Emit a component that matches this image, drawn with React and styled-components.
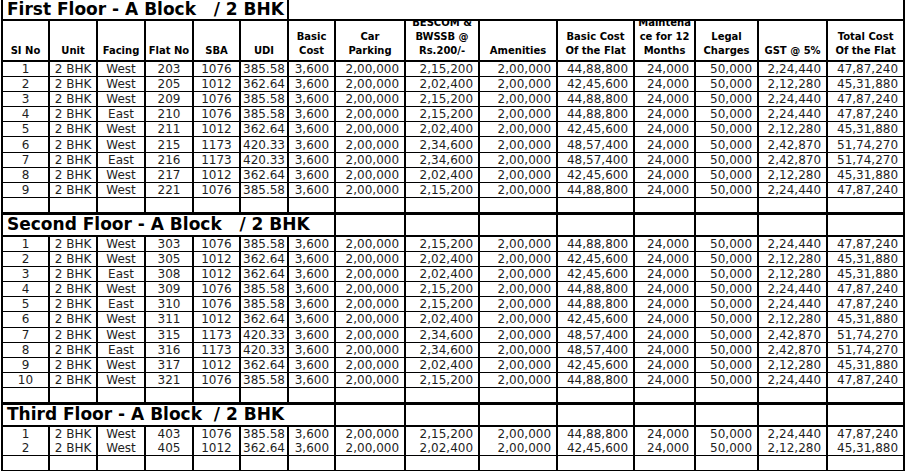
import React from "react";
import styled, { createGlobalStyle } from "styled-components";

const GlobalStyle = createGlobalStyle`
  body {
    margin: 0;
    background: #fff;
  }
`;

const COL_WIDTHS = [47, 48, 48, 48, 47, 48, 47, 70, 74, 78, 77, 61, 63, 69, 77];
const ALIGN = ["center", "center", "center", "center", "center", "center",
  "right", "right", "right", "right", "right", "right", "right", "right", "right"];

const HEADERS = [
  ["SI No"], ["Unit"], ["Facing"], ["Flat No"], ["SBA"], ["UDI"],
  ["Basic", "Cost"], ["Car", "Parking"], ["BESCOM &", "BWSSB @", "Rs.200/-"],
  ["Amenities"], ["Basic Cost", "Of the Flat"], ["Maintena", "ce for 12", "Months"],
  ["Legal", "Charges"], ["GST @ 5%"], ["Total Cost", "Of the Flat"],
];

// flat types: sba, udi, bescom, basic flat cost, gst, total
const TYPES = {
  A: ["1076", "385.58", "2,15,200", "44,88,800", "2,24,440", "47,87,240"],
  B: ["1012", "362.64", "2,02,400", "42,45,600", "2,12,280", "45,31,880"],
  C: ["1173", "420.33", "2,34,600", "48,57,400", "2,42,870", "51,74,270"],
};

const FLOORS = [
  {
    title: "First Floor - A Block   / 2 BHK",
    flats: [
      ["West", "203", "A"], ["West", "205", "B"], ["West", "209", "A"],
      ["East", "210", "A"], ["West", "211", "B"], ["West", "215", "C"],
      ["East", "216", "C"], ["West", "217", "B"], ["West", "221", "A"],
    ],
  },
  {
    title: "Second Floor - A Block   / 2 BHK",
    flats: [
      ["West", "303", "A"], ["West", "305", "B"], ["East", "308", "B"],
      ["West", "309", "A"], ["East", "310", "A"], ["West", "311", "B"],
      ["West", "315", "C"], ["East", "316", "C"], ["West", "317", "B"],
      ["West", "321", "A"],
    ],
  },
  {
    title: "Third Floor - A Block  / 2 BHK",
    flats: [["West", "403", "A"], ["West", "405", "B"]],
    noInnerLines: true,
  },
];

const toRow = (i, [facing, flatNo, type]) => {
  const [sba, udi, bescom, basic, gst, total] = TYPES[type];
  return [String(i + 1), "2 BHK", facing, flatNo, sba, udi, "3,600", "2,00,000",
    bescom, "2,00,000", basic, "24,000", "50,000", gst, total];
};

const Sheet = styled.table`
  border-collapse: collapse;
  table-layout: fixed;
  width: 904px;
  margin-left: 1px;
  font-family: "DejaVu Sans", Verdana, sans-serif;
  color: #1e1e1e;
  border-left: 2px solid #000;
  border-right: 2px solid #000;
`;

const TitleCell = styled.td`
  height: ${(p) => (p.$first ? "19px" : "20px")};
  padding: 0 0 0 4px;
  font-size: 17px;
  font-weight: bold;
  color: #000;
  white-space: pre;
  line-height: 19px;
  overflow: hidden;
  border-top: ${(p) => (p.$first ? "none" : "3px solid #000")};
  border-bottom: 2px solid #000;
  border-right: 2px solid #000;
  vertical-align: middle;
`;

const BlankCell = styled.td`
  padding: 0;
  border-top: ${(p) => (p.$first ? "none" : "3px solid #000")};
  border-bottom: 2px solid #000;
  border-left: ${(p) => (p.$open ? "none" : "2px solid #000")};
  border-right: ${(p) => (p.$open ? "none" : "2px solid #000")};
`;

const HeadCell = styled.th`
  padding: 0;
  border-left: 2px solid #000;
  border-right: 2px solid #000;
  border-bottom: 2px solid #000;
  font-size: 10px;
  font-weight: bold;
  color: #000;
`;

const HeadInner = styled.div`
  height: 39px;
  display: flex;
  flex-direction: column;
  justify-content: flex-end;
  align-items: center;
  overflow: hidden;
  padding-bottom: 2px;
  box-sizing: border-box;
  line-height: 14px;
  white-space: nowrap;
`;

const Cell = styled.td`
  height: 14.1px;
  padding: 0 ${(p) => (p.$align === "right" ? "5px" : "2px")} 0 2px;
  border-left: 2px solid #000;
  border-right: 2px solid #000;
  border-bottom: ${(p) => (p.$noLine ? "none" : "1px solid #000")};
  font-size: 12px;
  line-height: 14px;
  text-align: ${(p) => p.$align};
  white-space: nowrap;
  overflow: hidden;
  vertical-align: middle;
`;

const FloorTitle = ({ title, first }) => (
  <tr>
    <TitleCell colSpan={first ? 6 : 7} $first={first}>{title}</TitleCell>
    {first ? (
      <BlankCell colSpan={9} $first $open />
    ) : (
      COL_WIDTHS.slice(7).map((_, i) => <BlankCell key={i} />)
    )}
  </tr>
);

const EmptyRow = () => (
  <tr>
    {COL_WIDTHS.map((_, i) => (
      <Cell key={i} $align="center">&nbsp;</Cell>
    ))}
  </tr>
);

export default function App() {
  return (
    <>
      <GlobalStyle />
      <Sheet>
        <colgroup>
          {COL_WIDTHS.map((w, i) => (
            <col key={i} style={{ width: w }} />
          ))}
        </colgroup>
        <tbody>
          {FLOORS.map((floor, f) => (
            <React.Fragment key={f}>
              <FloorTitle title={floor.title} first={f === 0} />
              {f === 0 && (
                <tr>
                  {HEADERS.map((lines, i) => (
                    <HeadCell key={i}>
                      <HeadInner>
                        {lines.map((l) => (
                          <span key={l}>{l}</span>
                        ))}
                      </HeadInner>
                    </HeadCell>
                  ))}
                </tr>
              )}
              {floor.flats.map((flat, r) => (
                <tr key={r}>
                  {toRow(r, flat).map((v, c) => (
                    <Cell
                      key={c}
                      $align={ALIGN[c]}
                      $noLine={floor.noInnerLines && r < floor.flats.length - 1}
                    >
                      {v}
                    </Cell>
                  ))}
                </tr>
              ))}
              <EmptyRow />
            </React.Fragment>
          ))}
        </tbody>
      </Sheet>
    </>
  );
}
